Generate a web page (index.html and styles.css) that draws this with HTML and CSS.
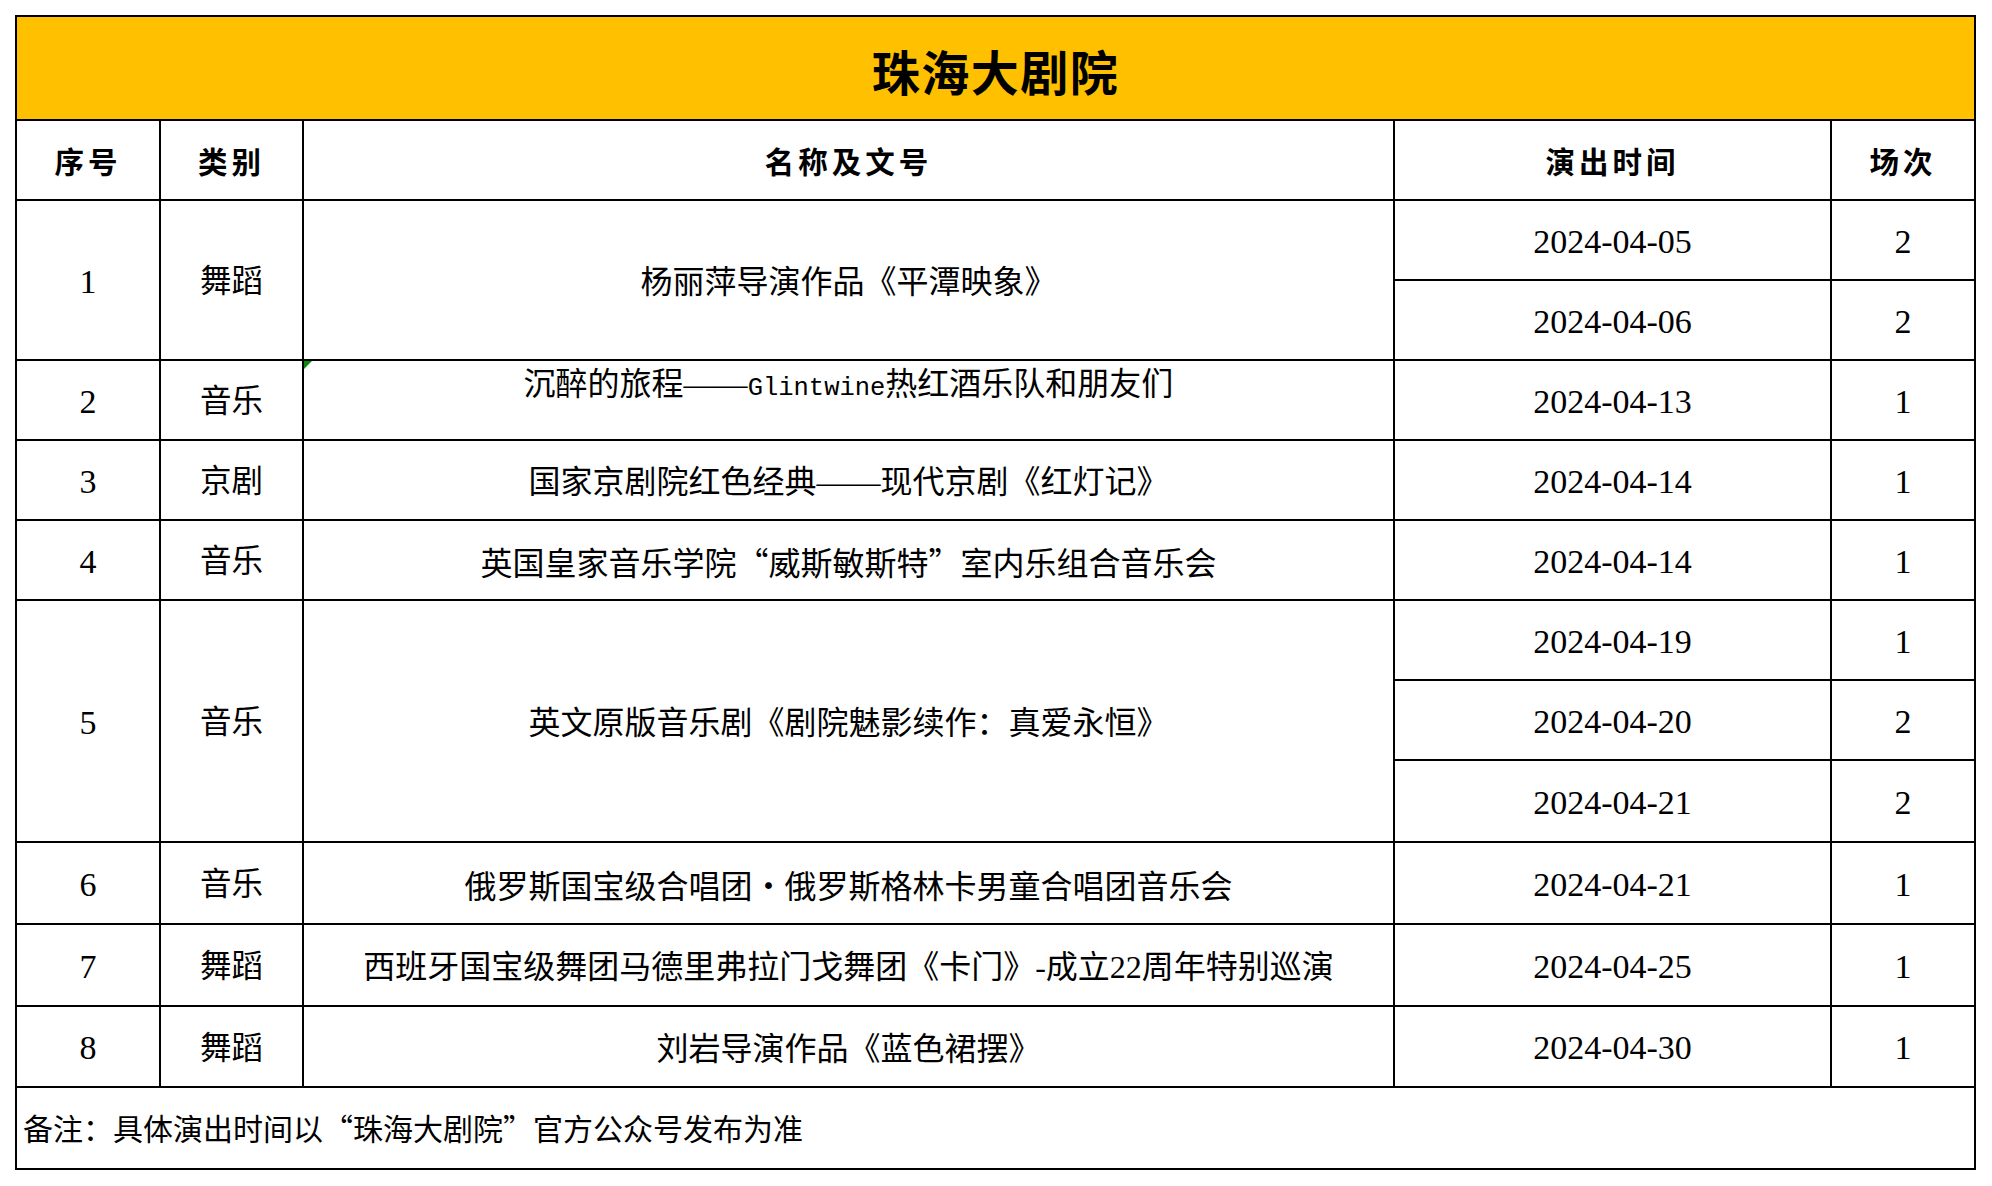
FILE: index.html
```html
<!DOCTYPE html>
<html lang="zh-CN">
<head>
<meta charset="utf-8">
<title>珠海大剧院</title>
<link rel="stylesheet" href="styles.css">
</head>
<body>
<table class="sheet">
  <colgroup>
    <col class="c-no"><col class="c-type"><col class="c-name"><col class="c-date"><col class="c-count">
  </colgroup>
  <tr class="r-title"><td colspan="5" class="title">珠海大剧院</td></tr>
  <tr class="r-head">
    <td class="head">序号</td><td class="head">类别</td><td class="head">名称及文号</td><td class="head">演出时间</td><td class="head">场次</td>
  </tr>
  <tr class="r80">
    <td rowspan="2" class="num">1</td><td rowspan="2">舞蹈</td><td rowspan="2" class="name">杨丽萍导演作品《平潭映象》</td><td class="num">2024-04-05</td><td class="num">2</td>
  </tr>
  <tr class="r80"><td class="num">2024-04-06</td><td class="num">2</td></tr>
  <tr class="r80">
    <td class="num">2</td><td>音乐</td><td class="name top flag">沉醉的旅程——<span class="mono">Glintwine</span>热红酒乐队和朋友们</td><td class="num">2024-04-13</td><td class="num">1</td>
  </tr>
  <tr class="r80">
    <td class="num">3</td><td>京剧</td><td class="name">国家京剧院红色经典——现代京剧《红灯记》</td><td class="num">2024-04-14</td><td class="num">1</td>
  </tr>
  <tr class="r80">
    <td class="num">4</td><td>音乐</td><td class="name">英国皇家音乐学院<span class="cjk">“</span>威斯敏斯特<span class="cjk">”</span>室内乐组合音乐会</td><td class="num">2024-04-14</td><td class="num">1</td>
  </tr>
  <tr class="r80">
    <td rowspan="3" class="num">5</td><td rowspan="3">音乐</td><td rowspan="3" class="name">英文原版音乐剧《剧院魅影续作：真爱永恒》</td><td class="num">2024-04-19</td><td class="num">1</td>
  </tr>
  <tr class="r80"><td class="num">2024-04-20</td><td class="num">2</td></tr>
  <tr class="r82"><td class="num">2024-04-21</td><td class="num">2</td></tr>
  <tr class="r82">
    <td class="num">6</td><td>音乐</td><td class="name">俄罗斯国宝级合唱团<span class="cjk">•</span>俄罗斯格林卡男童合唱团音乐会</td><td class="num">2024-04-21</td><td class="num">1</td>
  </tr>
  <tr class="r82">
    <td class="num">7</td><td>舞蹈</td><td class="name">西班牙国宝级舞团马德里弗拉门戈舞团《卡门》-成立22周年特别巡演</td><td class="num">2024-04-25</td><td class="num">1</td>
  </tr>
  <tr class="r81">
    <td class="num">8</td><td>舞蹈</td><td class="name">刘岩导演作品《蓝色裙摆》</td><td class="num">2024-04-30</td><td class="num">1</td>
  </tr>
  <tr class="r82"><td colspan="5" class="note">备注：具体演出时间以<span class="cjk">“</span>珠海大剧院<span class="cjk">”</span>官方公众号发布为准</td></tr>
</table>
</body>
</html>
```

FILE: styles.css
```css
html, body {
  margin: 0;
  padding: 0;
  background: #ffffff;
}

body {
  padding: 15px 0 0 15px;
}

.sheet {
  border-collapse: collapse;
  table-layout: fixed;
  width: 1959px;
  font-family: "Liberation Serif", "Noto Sans CJK SC", serif;
  font-size: 31.5px;
  line-height: 1.25;
  color: #000000;
}

.c-no { width: 144px; }
.c-type { width: 143px; }
.c-name { width: 1091px; }
.c-date { width: 437px; }
.c-count { width: 144px; }

.sheet td {
  border: 2px solid #000000;
  padding: 4px 0 0 0;
  text-align: center;
  vertical-align: middle;
  white-space: nowrap;
}

.r-title { height: 104px; }
.r-head { height: 80px; }
.r80 { height: 80px; }
.r81 { height: 81px; }
.r82 { height: 82px; }

.sheet td.title {
  background: #ffc000;
  font-family: "Noto Sans CJK SC", sans-serif;
  font-weight: 700;
  font-size: 48px;
  letter-spacing: 1.5px;
  padding-top: 4px;
}

.sheet td.head {
  font-family: "Noto Sans CJK SC", sans-serif;
  font-weight: 700;
  letter-spacing: 4px;
  font-size: 29.5px;
  padding-top: 0;
}

.sheet td.num {
  font-size: 34px;
}

.sheet td.name {
  font-size: 32px;
}

.sheet td.top {
  vertical-align: top;
  padding-top: 3px;
}

.flag {
  position: relative;
}

.flag::before {
  content: "";
  position: absolute;
  left: 0;
  top: 0;
  border-top: 8px solid #0b8a0b;
  border-right: 8px solid transparent;
}

.mono {
  font-family: "Liberation Mono", monospace;
  font-size: 25.5px;
}

.cjk {
  font-family: "Noto Sans CJK SC", sans-serif;
}

.sheet td.note {
  text-align: left;
  padding-left: 6px;
  padding-top: 2px;
  font-size: 30px;
}
```
